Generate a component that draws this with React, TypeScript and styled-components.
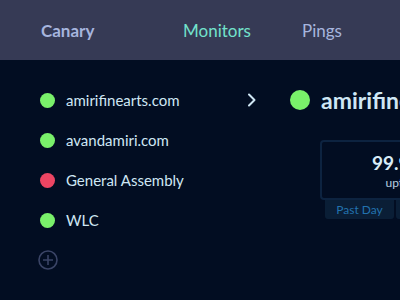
import styled, { createGlobalStyle } from "styled-components";

const GlobalStyle = createGlobalStyle`
  html, body {
    margin: 0;
    padding: 0;
    background: #020d22;
    font-family: Lato, "Open Sans", sans-serif;
    overflow: hidden;
  }
`;

const sites = [
  { name: "amirifinearts.com", up: true, selected: true },
  { name: "avandamiri.com", up: true },
  { name: "General Assembly", up: false },
  { name: "WLC", up: true },
];

const App = () => {
  return (
    <>
      <GlobalStyle />
      <Page>
        <TopBar>
          <Brand>Canary</Brand>
          <NavItem active>Monitors</NavItem>
          <NavItem>Pings</NavItem>
        </TopBar>

        <Main>
          <Sidebar>
            {sites.map((s) => (
              <SiteRow key={s.name}>
                <Dot up={s.up} />
                <SiteName>{s.name}</SiteName>
                {s.selected && (
                  <Chevron width="10" height="14" viewBox="0 0 10 14">
                    <path d="M2 1.5l5.5 5.5L2 12.5" fill="none" stroke="#cfe6f4" strokeWidth="2" strokeLinecap="round" strokeLinejoin="round" />
                  </Chevron>
                )}
              </SiteRow>
            ))}
            <SiteRow>
              <AddButton>
                <svg width="20" height="20" viewBox="0 0 20 20">
                  <circle cx="10" cy="10" r="9" fill="none" stroke="#3a4466" strokeWidth="1.6" />
                  <path d="M10 5v10M5 10h10" stroke="#3a4466" strokeWidth="1.6" />
                </svg>
              </AddButton>
            </SiteRow>
          </Sidebar>

          <Detail>
            <TitleRow>
              <Dot up big />
              <Title>amirifinearts.com</Title>
            </TitleRow>
            <StatCard>
              <StatBox>
                <StatValue>99.99%</StatValue>
                <StatLabel>uptime</StatLabel>
              </StatBox>
              <Tabs>
                <Tab>Past Day</Tab>
                <Tab>Past Week</Tab>
              </Tabs>
            </StatCard>
          </Detail>
        </Main>
      </Page>
    </>
  );
};

export default App;

const Page = styled.div`
  width: 400px;
  height: 300px;
  overflow: hidden;
`;

const TopBar = styled.header`
  height: 60px;
  background: #363a55;
  display: flex;
  align-items: center;
  padding-left: 41px;
  box-sizing: border-box;
`;

const Brand = styled.div`
  font-size: 17px;
  font-weight: 700;
  color: #a6b5de;
  width: 142px;
  flex-shrink: 0;
`;

const NavItem = styled.div<{ active?: boolean }>`
  font-size: 17px;
  color: ${(p) => (p.active ? "#72e2cc" : "#a6b5de")};
  width: 119px;
  flex-shrink: 0;
`;

const Main = styled.main`
  display: flex;
  padding-top: 20px;
`;

const Sidebar = styled.nav`
  padding-left: 40px;
  width: 216px;
  flex-shrink: 0;
`;

const SiteRow = styled.div`
  height: 40px;
  display: flex;
  align-items: center;
`;

const Dot = styled.span<{ up?: boolean; big?: boolean }>`
  width: ${(p) => (p.big ? 20 : 15)}px;
  height: ${(p) => (p.big ? 20 : 15)}px;
  border-radius: 50%;
  background: ${(p) => (p.up ? "#79f06a" : "#ec4563")};
  flex-shrink: 0;
`;

const SiteName = styled.span`
  margin-left: 11px;
  font-size: 15px;
  color: #cfe6f4;
  flex: 1;
  white-space: nowrap;
`;

const Chevron = styled.svg`
  flex-shrink: 0;
  margin-right: -1px;
`;

const AddButton = styled.div`
  width: 20px;
  height: 20px;
  margin-left: -2px;
  display: flex;
`;

const Detail = styled.section`
  padding-left: 34px;
  flex-shrink: 0;
`;

const TitleRow = styled.div`
  height: 40px;
  display: flex;
  align-items: center;
  gap: 11px;
`;

const Title = styled.h1`
  margin: 0;
  font-size: 23px;
  font-weight: 700;
  color: #cfe6f4;
  white-space: nowrap;
`;

const StatCard = styled.div`
  margin: 20px 0 0 30px;
  width: 168px;
`;

const StatBox = styled.div`
  height: 60px;
  border: 2px solid #0d2340;
  border-radius: 4px;
  box-sizing: border-box;
  display: flex;
  flex-direction: column;
  align-items: center;
  justify-content: center;
`;

const StatValue = styled.div`
  font-size: 19px;
  font-weight: 700;
  color: #d8ecf8;
`;

const StatLabel = styled.div`
  font-size: 12px;
  color: #b8d0e0;
  margin-top: 1px;
`;

const Tabs = styled.div`
  display: flex;
  gap: 2px;
  margin: 0 5px;
`;

const Tab = styled.div`
  width: 69px;
  height: 19px;
  background: #0a1e36;
  border-radius: 0 0 3px 3px;
  color: #2272ae;
  font-size: 12px;
  display: flex;
  align-items: center;
  justify-content: center;
`;
